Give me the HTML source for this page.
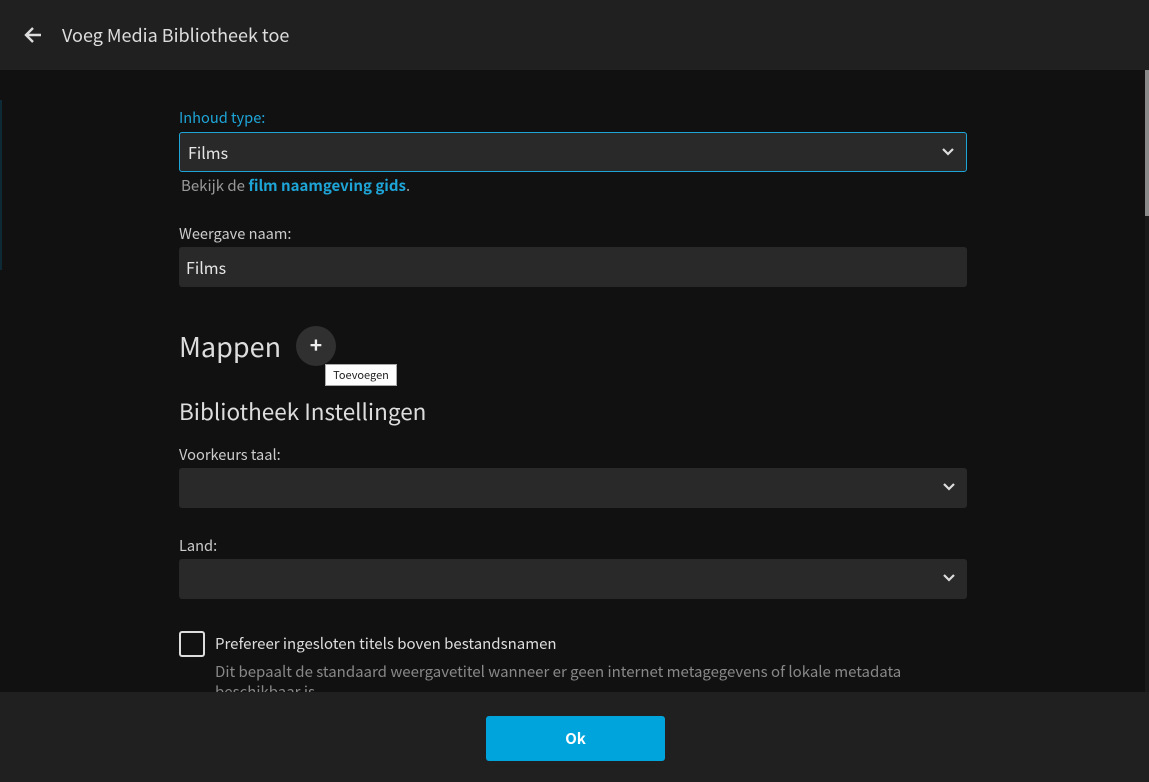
<!DOCTYPE html>
<html><head><meta charset="utf-8"><style>
*{box-sizing:border-box;margin:0;padding:0}
body{width:1149px;height:782px;overflow:hidden;background:#111;font-family:"Noto Sans CJK JP","Liberation Sans",sans-serif;color:#ddd;position:relative}
.hdr{position:absolute;left:0;top:0;width:1149px;height:70px;background:#202020}
.hdr .t{position:absolute;left:62px;top:22px;font-size:18px;line-height:26px;color:#ddd}
.a{position:absolute}
.lbl{position:absolute;left:179px;font-size:14.6px;line-height:18px;color:#ccc}
.box{position:absolute;left:179px;width:788px;height:40px;background:#292929;border-radius:3px}
.chev{position:absolute;right:11px;top:14px}
.ft{position:absolute;left:0;top:692px;width:1149px;height:90px;background:#202020}
</style></head><body>
<div class="hdr">
<svg class="a" style="left:23px;top:25px" width="20" height="20" viewBox="0 0 20 20"><path d="M18 10H4M10 3L3 10l7 7" stroke="#ddd" stroke-width="2.4" fill="none"/></svg>
<div class="t">Voeg Media Bibliotheek toe</div>
</div>
<div class="a" style="left:1145px;top:70px;width:4px;height:622px;background:#1a1a1a"></div>
<div class="a" style="left:1145px;top:70px;width:4px;height:146px;background:#8a8a8a"></div>
<div class="a" style="left:0;top:100px;width:2px;height:170px;background:#0e2a36"></div>

<div class="lbl" style="top:109px;color:#1ea5d8">Inhoud type:</div>
<div class="box" style="top:132px;border:1px solid #1ea5d8"><div class="a" style="left:8px;top:9px;font-size:16px;line-height:20px;color:#e6e6e6">Films</div>
<svg class="chev" width="14" height="10" viewBox="0 0 14 10"><path d="M2 2l5 5 5-5" stroke="#ddd" stroke-width="2.2" fill="none"/></svg></div>
<div class="lbl" style="top:177px;left:181px;color:#999;font-size:15px">Bekijk de <b style="color:#1ea5d8">film naamgeving gids</b>.</div>

<div class="lbl" style="top:225px">Weergave naam:</div>
<div class="box" style="top:247px"><div class="a" style="left:7px;top:10px;font-size:16px;line-height:20px;color:#e6e6e6">Films</div></div>

<div class="a" style="left:179px;top:328px;font-size:27px;line-height:36px;color:#ddd">Mappen</div>
<div class="a" style="left:296px;top:326px;width:40px;height:40px;border-radius:50%;background:#303030;color:#eee;font-size:21px;font-weight:bold;line-height:38px;text-align:center">+</div>
<div class="a" style="left:325px;top:364px;width:72px;height:22px;background:#fff;border:1px solid #aaa;color:#222;font-size:11px;line-height:20px;text-align:center">Toevoegen</div>

<div class="a" style="left:179px;top:397px;font-size:22.5px;line-height:28px;color:#ddd">Bibliotheek Instellingen</div>

<div class="lbl" style="top:446px">Voorkeurs taal:</div>
<div class="box" style="top:468px"><svg class="chev" width="14" height="10" viewBox="0 0 14 10"><path d="M2 2l5 5 5-5" stroke="#ddd" stroke-width="2.2" fill="none"/></svg></div>
<div class="lbl" style="top:537px">Land:</div>
<div class="box" style="top:559px"><svg class="chev" width="14" height="10" viewBox="0 0 14 10"><path d="M2 2l5 5 5-5" stroke="#ddd" stroke-width="2.2" fill="none"/></svg></div>

<div class="a" style="left:179px;top:631px;width:26px;height:26px;border:2px solid #ddd;border-radius:3px"></div>
<div class="a" style="left:215px;top:634px;font-size:15px;line-height:20px;color:#ddd">Prefereer ingesloten titels boven bestandsnamen</div>
<div class="a" style="left:215px;top:662px;width:720px;font-size:15px;line-height:20px;color:#888">Dit bepaalt de standaard weergavetitel wanneer er geen internet metagegevens of lokale metadata beschikbaar is.</div>

<div class="ft"><div class="a" style="left:486px;top:24px;width:179px;height:45px;background:#00a4dc;border-radius:3px;color:#fff;font-weight:bold;font-size:15px;line-height:45px;text-align:center">Ok</div></div>
</body></html>
